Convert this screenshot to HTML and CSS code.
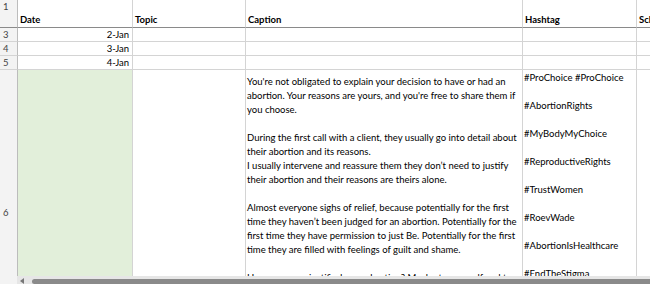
FILE: index.html
```html
<!DOCTYPE html>
<html>
<head>
<meta charset="utf-8">
<link rel="stylesheet" href="styles.css">
</head>
<body>
<div class="sheet">
  <div class="grid">
    <div class="rh rh-top">1</div>
    <div class="cell hdr">Date</div>
    <div class="cell hdr">Topic</div>
    <div class="cell hdr">Caption</div>
    <div class="cell hdr">Hashtag</div>
    <div class="cell hdr">Schedule</div>

    <div class="rh">3</div>
    <div class="cell date">2-Jan</div>
    <div class="cell"></div>
    <div class="cell"></div>
    <div class="cell"></div>
    <div class="cell"></div>

    <div class="rh">4</div>
    <div class="cell date">3-Jan</div>
    <div class="cell"></div>
    <div class="cell"></div>
    <div class="cell"></div>
    <div class="cell"></div>

    <div class="rh">5</div>
    <div class="cell date">4-Jan</div>
    <div class="cell"></div>
    <div class="cell"></div>
    <div class="cell"></div>
    <div class="cell"></div>

    <div class="rh rh-tall">6</div>
    <div class="cell green"></div>
    <div class="cell"></div>
    <div class="cell caption">You're not obligated to explain your decision to have or had an<br>abortion. Your reasons are yours, and you're free to share them if<br>you choose.<br>&nbsp;<br>During the first call with a client, they usually go into detail about<br>their abortion and its reasons.<br>I usually intervene and reassure them they don’t need to justify<br>their abortion and their reasons are theirs alone.<br>&nbsp;<br>Almost everyone sighs of relief, because potentially for the first<br>time they haven’t been judged for an abortion. Potentially for the<br>first time they have permission to just Be. Potentially for the first<br>time they are filled with feelings of guilt and shame.<br>&nbsp;<br>Have you ever justified your abortion? Maybe to yourself and to<br>others?</div>
    <div class="cell tags">#ProChoice #ProChoice<br>&nbsp;<br>#AbortionRights<br>&nbsp;<br>#MyBodyMyChoice<br>&nbsp;<br>#ReproductiveRights<br>&nbsp;<br>#TrustWomen<br>&nbsp;<br>#RoevWade<br>&nbsp;<br>#AbortionIsHealthcare<br>&nbsp;<br>#EndTheStigma</div>
    <div class="cell"></div>
  </div>
  <div class="hscroll">
    <div class="hs-corner"></div>
    <div class="hs-track">
      <div class="hs-arrow"></div>
      <div class="hs-thumb"></div>
    </div>
  </div>
</div>
</body>
</html>
```

FILE: styles.css
```css
* { box-sizing: border-box; }
html, body {
  margin: 0;
  padding: 0;
  background: #fff;
  overflow: hidden;
}
.sheet {
  width: 650px;
  height: 284px;
  overflow: hidden;
  display: flex;
  flex-direction: column;
  font-family: Lato, "Liberation Sans", sans-serif;
  font-size: 9.5px;
  line-height: 14px;
  color: #000;
}
.grid {
  height: 276px;
  overflow: hidden;
  display: grid;
  grid-template-columns: 18px 115px 113px 277px 114px 80px;
  grid-template-rows: 28px 14px 14px 14px 286px;
  width: 717px;
  flex: none;
}
.cell {
  border-right: 1px solid #d4d4d4;
  border-bottom: 1px solid #d4d4d4;
  white-space: nowrap;
  overflow: hidden;
}
.rh {
  background: #f3f3f3;
  border-right: 1px solid #bcbcbc;
  border-bottom: 1px solid #d4d4d4;
  color: #444;
  padding-left: 3px;
  display: flex;
  align-items: center;
}
.rh-top {
  align-items: flex-start;
  border-bottom: 1px solid #8a8a8a;
}
.hdr {
  font-weight: bold;
  display: flex;
  align-items: flex-end;
  padding-left: 2px;
  border-bottom: 1px solid #8a8a8a;
}
.date {
  text-align: right;
  padding-right: 3px;
}
.green {
  background: #e2efda;
}
.caption {
  padding: 5px 0 0 1px;
}
.tags {
  padding: 1px 0 0 1px;
}
.hscroll {
  height: 8px;
  display: flex;
  flex: none;
}
.hs-corner {
  width: 17px;
  background: #f3f3f3;
}
.hs-track {
  flex: 1;
  background: #e6e6e6;
  display: flex;
  align-items: flex-end;
  padding-left: 3px;
  gap: 8px;
}
.hs-arrow {
  width: 0;
  height: 0;
  border-top: 3px solid transparent;
  border-bottom: 3px solid transparent;
  border-right: 4px solid #777;
}
.hs-thumb {
  flex: 1;
  height: 5px;
  background: #8a8a8a;
  border-radius: 3px 0 0 3px;
}
```
